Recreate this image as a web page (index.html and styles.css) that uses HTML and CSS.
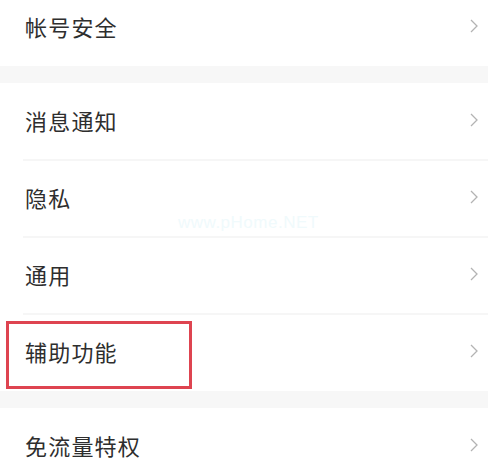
FILE: index.html
```html
<!DOCTYPE html>
<html lang="zh-CN">
<head>
<meta charset="utf-8">
<link rel="stylesheet" href="styles.css">
</head>
<body>
<div class="page">
  <div class="group first">
    <div class="row"><span class="label">帐号安全</span><svg class="chev" viewBox="0 0 8 14"><path d="M1 1 L7 7 L1 13"/></svg></div>
  </div>
  <div class="band"></div>
  <div class="group">
    <div class="row"><span class="label">消息通知</span><svg class="chev" viewBox="0 0 8 14"><path d="M1 1 L7 7 L1 13"/></svg></div>
    <div class="row"><span class="label">隐私</span><svg class="chev" viewBox="0 0 8 14"><path d="M1 1 L7 7 L1 13"/></svg></div>
    <div class="row"><span class="label">通用</span><svg class="chev" viewBox="0 0 8 14"><path d="M1 1 L7 7 L1 13"/></svg></div>
    <div class="row highlight"><span class="label">辅助功能</span><svg class="chev" viewBox="0 0 8 14"><path d="M1 1 L7 7 L1 13"/></svg><span class="mark"></span></div>
  </div>
  <div class="band"></div>
  <div class="group">
    <div class="row"><span class="label">免流量特权</span><svg class="chev" viewBox="0 0 8 14"><path d="M1 1 L7 7 L1 13"/></svg></div>
  </div>
  <span class="watermark">www.pHome.NET</span>
</div>
</body>
</html>
```
FILE: styles.css
```css
html, body {
  margin: 0;
  padding: 0;
  background: #ffffff;
  overflow: hidden;
}
.page {
  position: relative;
  width: 488px;
  height: 469px;
  overflow: hidden;
  font-family: "Noto Sans CJK SC", "Noto Sans", sans-serif;
}
.group {
  display: flex;
  flex-direction: column;
  background: #fff;
}
.group.first {
  margin-top: -11px;
}
.row {
  position: relative;
  height: 77px;
  box-sizing: border-box;
  display: flex;
  align-items: center;
  justify-content: space-between;
  padding: 0 10px 3px 25px;
}
.row + .row::before {
  content: "";
  position: absolute;
  left: 23px;
  right: 0;
  top: -1px;
  height: 2px;
  background: #f6f6f6;
}
.label {
  font-size: 22px;
  letter-spacing: 1.2px;
  color: #2e2e2e;
  line-height: 1;
}
.chev {
  width: 8px;
  height: 14px;
  fill: none;
  stroke: #b3b3b3;
  stroke-width: 1.3;
}
.band {
  height: 17px;
  background: #f7f7f7;
}
.mark {
  position: absolute;
  left: 6px;
  top: 7px;
  width: 180px;
  height: 62px;
  border: 3px solid #de4450;
}
.watermark {
  position: absolute;
  left: 178px;
  top: 213px;
  font-family: "Liberation Sans", sans-serif;
  font-size: 17px;
  color: #f0fafc;
  letter-spacing: 0.5px;
}
```
